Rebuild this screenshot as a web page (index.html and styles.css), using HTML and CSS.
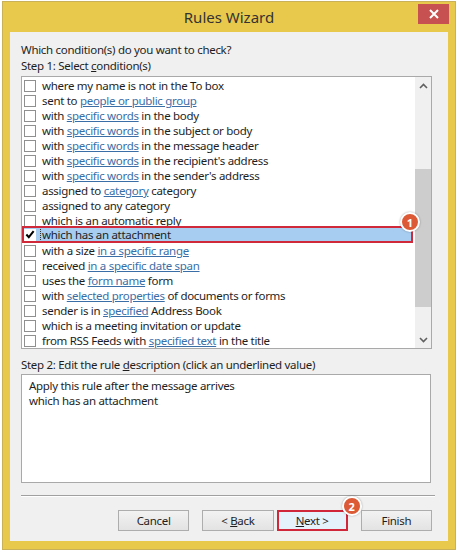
FILE: index.html
```html
<!DOCTYPE html>
<html>
<head>
<meta charset="utf-8">
<link rel="stylesheet" href="styles.css">
</head>
<body>
<div class="window">
  <div class="titlebar">
    <div class="title">Rules Wizard</div>
    <div class="close"><svg width="10" height="10" viewBox="0 0 10 10"><path d="M1 1L9 9M9 1L1 9" stroke="#fff" stroke-width="2"/></svg></div>
  </div>
  <div class="content">
    <div class="label l1">Which condition(s) do you want to check?</div>
    <div class="label l2">Step 1: Select <u>c</u>ondition(s)</div>
    <div class="listbox">
      <div class="items">
        <div class="row"><span class="cb"></span><span class="txt">where my name is not in the To box</span></div>
        <div class="row"><span class="cb"></span><span class="txt">sent to <a>people or public group</a></span></div>
        <div class="row"><span class="cb"></span><span class="txt">with <a>specific words</a> in the body</span></div>
        <div class="row"><span class="cb"></span><span class="txt">with <a>specific words</a> in the subject or body</span></div>
        <div class="row"><span class="cb"></span><span class="txt">with <a>specific words</a> in the message header</span></div>
        <div class="row"><span class="cb"></span><span class="txt">with <a>specific words</a> in the recipient's address</span></div>
        <div class="row"><span class="cb"></span><span class="txt">with <a>specific words</a> in the sender's address</span></div>
        <div class="row"><span class="cb"></span><span class="txt">assigned to <a>category</a> category</span></div>
        <div class="row"><span class="cb"></span><span class="txt">assigned to any category</span></div>
        <div class="row"><span class="cb"></span><span class="txt">which is an automatic reply</span></div>
        <div class="row sel"><span class="cb checked"><svg width="11" height="11" viewBox="0 0 11 11"><path d="M1.5 5.5L4.2 8.5L9.5 1.8" stroke="#000" stroke-width="2.2" fill="none"/></svg></span><span class="txt focus">which has an attachment</span></div>
        <div class="row"><span class="cb"></span><span class="txt">with a size <a>in a specific range</a></span></div>
        <div class="row"><span class="cb"></span><span class="txt">received <a>in a specific date span</a></span></div>
        <div class="row"><span class="cb"></span><span class="txt">uses the <a>form name</a> form</span></div>
        <div class="row"><span class="cb"></span><span class="txt">with <a>selected properties</a> of documents or forms</span></div>
        <div class="row"><span class="cb"></span><span class="txt">sender is in <a>specified</a> Address Book</span></div>
        <div class="row"><span class="cb"></span><span class="txt">which is a meeting invitation or update</span></div>
        <div class="row"><span class="cb"></span><span class="txt">from RSS Feeds with <a>specified text</a> in the title</span></div>
      </div>
      <div class="scrollbar">
        <div class="arrow"><svg width="9" height="6" viewBox="0 0 9 6"><path d="M1 5L4.5 1.5L8 5" stroke="#606060" stroke-width="1.6" fill="none"/></svg></div>
        <div class="track"><div class="thumb"></div></div>
        <div class="arrow"><svg width="9" height="6" viewBox="0 0 9 6"><path d="M1 1L4.5 4.5L8 1" stroke="#606060" stroke-width="1.6" fill="none"/></svg></div>
      </div>
      <div class="badge b1">1</div>
    </div>
    <div class="label l3">Step 2: Edit the rule <u>d</u>escription (click an underlined value)</div>
    <div class="desc">
      <div>Apply this rule after the message arrives</div>
      <div>which has an attachment</div>
    </div>
    <div class="sep"></div>
    <div class="buttons">
      <div class="btn"><span>Cancel</span></div>
      <div class="btn back"><span>&lt; <u>B</u>ack</span></div>
      <div class="btn next"><span><u>N</u>ext &gt;</span><div class="badge b2">2</div></div>
      <div class="btn finish"><span>Finish</span></div>
    </div>
  </div>
</div>
</body>
</html>
```
FILE: styles.css
```css
html, body {
  margin: 0;
  padding: 0;
  background: #ffffff;
}
body {
  font-family: "Noto Sans", "Open Sans", sans-serif;
  font-size: 11.5px;
  letter-spacing: -0.3px;
  color: #1e1e1e;
}
.window {
  margin: 1px 0 0 2px;
  border: 1px solid #c9b15a;
  background: #e9c94b;
  display: flex;
  flex-direction: column;
  padding: 0 7px 8px 7px;
  box-sizing: border-box;
  width: 454px;
  height: 549px;
}
.titlebar {
  height: 30px;
  position: relative;
  display: flex;
  align-items: center;
  justify-content: center;
  flex: none;
}
.title {
  font-size: 15px;
  letter-spacing: 0;
  color: #333;
}
.close {
  position: absolute;
  right: -1px;
  top: 2px;
  width: 31px;
  height: 20px;
  background: #c75050;
  display: flex;
  align-items: center;
  justify-content: center;
}
.content {
  flex: 1;
  background: #f0f0f0;
  padding: 10px 16px 0 11px;
  display: flex;
  flex-direction: column;
}
.label {
  height: 16px;
  line-height: 16px;
  white-space: nowrap;
}
.listbox {
  margin-top: 2px;
  height: 273px;
  border: 1px solid #a9a9a9;
  background: #fff;
  display: flex;
  position: relative;
  box-sizing: border-box;
}
.items {
  flex: 1;
  padding: 1px 1px 0 1px;
}
.row {
  height: 15px;
  display: flex;
  align-items: center;
  white-space: nowrap;
}
.cb {
  width: 10px;
  height: 10px;
  border: 1px solid #8f8f8f;
  background: #fff;
  margin-left: 1px;
  margin-right: 6px;
  flex: none;
  display: flex;
  align-items: center;
  justify-content: center;
}
.cb.checked {
  border-color: #fff;
}
.txt {
  line-height: 15px;
}
.txt a {
  color: #3a6ea6;
  text-decoration: underline;
}
.row.sel {
  background: #a7cdf0;
  outline: 2px solid #d02a3a;
  outline-offset: -1px;
  margin-right: 2px;
  position: relative;
  top: -1px;
}
.txt.focus {
  border-left: 1px dotted #333;
  margin-left: -2px;
  padding-left: 1px;
}
.scrollbar {
  width: 16px;
  background: #f0f0f0;
  display: flex;
  flex-direction: column;
  flex: none;
}
.arrow {
  height: 17px;
  display: flex;
  align-items: center;
  justify-content: center;
}
.track {
  flex: 1;
  padding-top: 75px;
}
.thumb {
  height: 138px;
  background: #cdcdcd;
}
.badge {
  position: absolute;
  width: 16px;
  height: 16px;
  border-radius: 50%;
  background: #dc5a36;
  border: 2px solid #fff;
  box-shadow: 0 0 2px rgba(0,0,0,0.35);
  color: #fff;
  font-size: 11px;
  font-weight: bold;
  letter-spacing: 0;
  display: flex;
  align-items: center;
  justify-content: center;
  line-height: 1;
}
.b1 {
  left: 378px;
  top: 135px;
}
.b2 {
  right: -16px;
  top: -16px;
}
.l3 {
  margin-top: 8px;
}
.desc {
  margin-top: 1px;
  height: 109px;
  width: 410px;
  border: 1px solid #a9a9a9;
  background: #fff;
  box-sizing: border-box;
  padding: 3px 7px;
  line-height: 15px;
}
.sep {
  margin-top: 12px;
  height: 1px;
  background: #a0a0a0;
  border-bottom: 1px solid #fff;
  width: 414px;
}
.buttons {
  display: flex;
  margin-top: 13px;
  margin-left: 97px;
}
.btn {
  width: 72px;
  height: 21px;
  box-sizing: border-box;
  border: 1px solid #adadad;
  background: linear-gradient(#f2f2f2, #e3e3e3);
  display: flex;
  align-items: center;
  justify-content: center;
  position: relative;
}
.back {
  margin-left: 13px;
}
.next {
  margin-left: 3px;
  border: 2px solid #d0283a;
  background: #e5f1fb;
}
.finish {
  margin-left: 13px;
}
```
